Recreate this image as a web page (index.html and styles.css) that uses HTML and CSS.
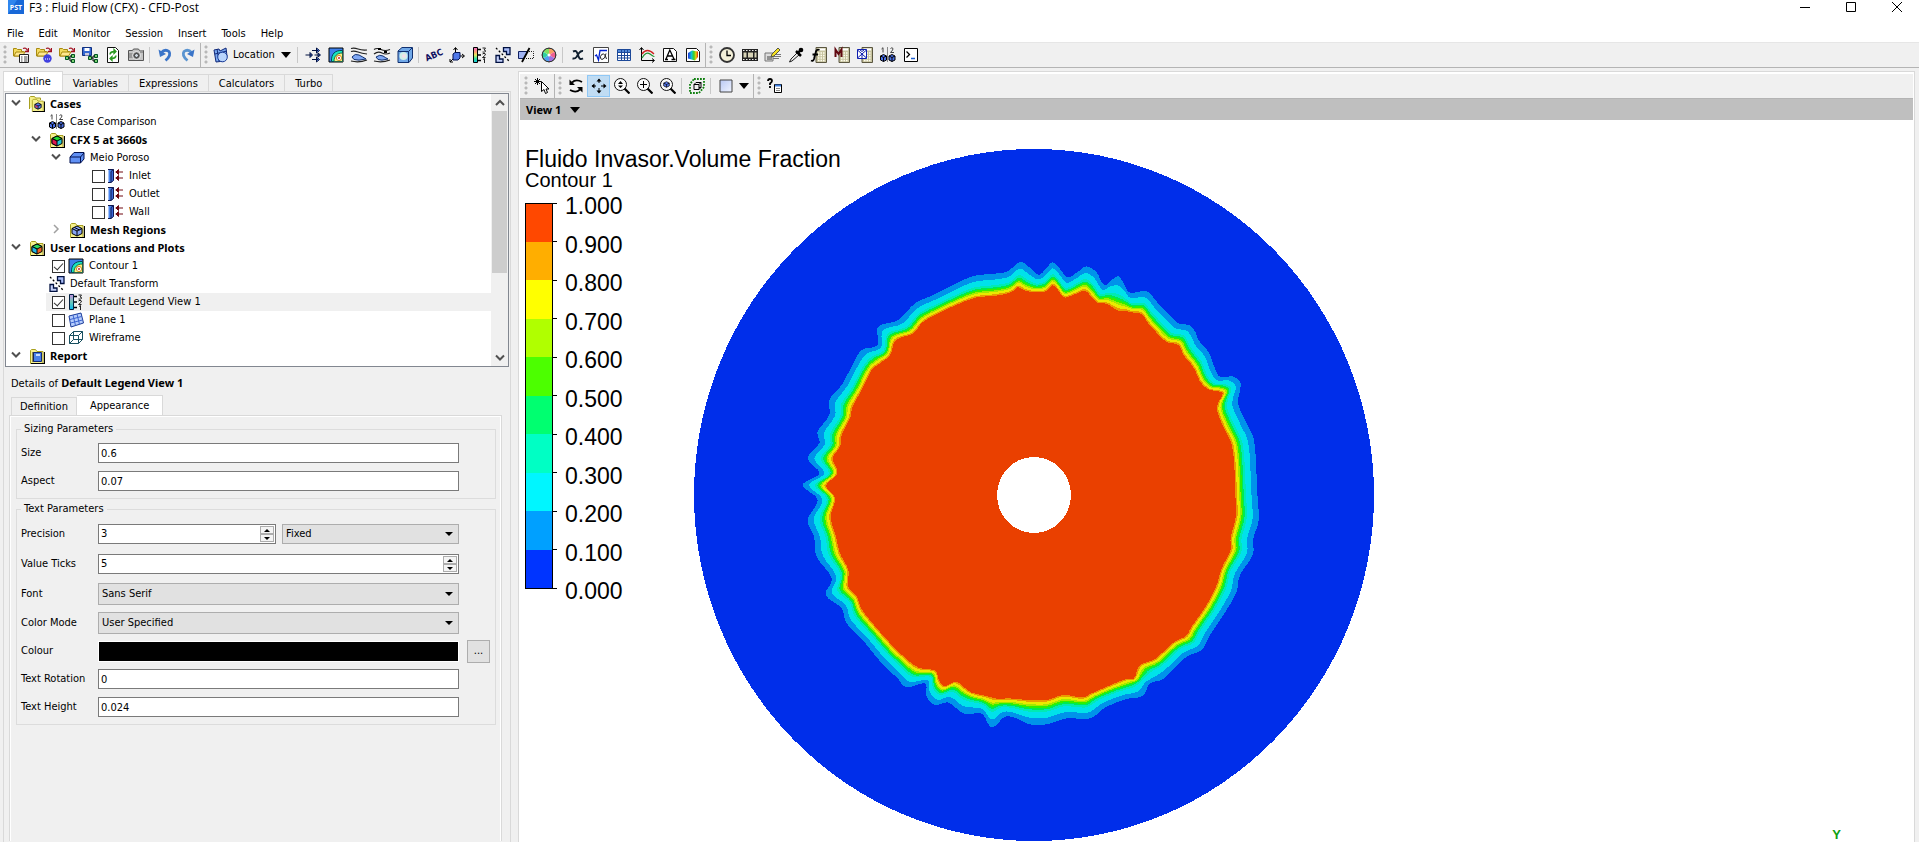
FILE: index.html
```html
<!DOCTYPE html>
<html lang="en">
<head>
<meta charset="UTF-8" />
<meta name="viewport" content="width=device-width, initial-scale=1" />
<title>F3 : Fluid Flow (CFX) - CFD-Post</title>
<link rel="stylesheet" href="styles.css">
</head>
<body>

<!-- shared icons -->
<svg class="defs" aria-hidden="true">
  <defs>
    <linearGradient id="gRain" x1="0" y1="0" x2="0" y2="1">
      <stop offset="0" stop-color="#f06ac8"/><stop offset=".3" stop-color="#ff9a70"/><stop offset=".5" stop-color="#e8f060"/><stop offset=".75" stop-color="#30e0a0"/><stop offset="1" stop-color="#10c8e8"/>
    </linearGradient>
    <linearGradient id="gCool" x1="0" y1="0" x2="0" y2="1">
      <stop offset="0" stop-color="#c890e0"/><stop offset=".5" stop-color="#70c8b8"/><stop offset="1" stop-color="#00b8f0"/>
    </linearGradient>
    <linearGradient id="gSq" x1="0" y1="0" x2="1" y2="1">
      <stop offset="0" stop-color="#b8c8f4"/><stop offset="1" stop-color="#f0f4ff"/>
    </linearGradient>
    <linearGradient id="gSpec" x1="0" y1="0" x2="1" y2="0">
      <stop offset="0" stop-color="#2030e0"/><stop offset=".35" stop-color="#10c0d0"/><stop offset=".6" stop-color="#40d020"/><stop offset=".8" stop-color="#f0d010"/><stop offset="1" stop-color="#e02010"/>
    </linearGradient>
  </defs>
  <symbol id="openfolder" viewBox="0 0 16 16">
    <path d="M.5 9V1.500h3l1 1h4v2h2L8 9z" fill="#f4dc60" stroke="#a88a10"/>
    <path d="M1 9l2-4h9L9.500 9z" fill="#ffe890" stroke="#a88a10"/>
    <path d="M10 1.500q3-1.500 4.500 2M15.500 1v3.500H12" fill="none" stroke="#a01020" stroke-width="1.300"/>
  </symbol>
  <symbol id="folder" viewBox="0 0 16 16">
    <path d="M1.500 15.500V2.500l1-1h4l1.500 2h6v12z" fill="#f6f08c" stroke="#a8a020"/>
    <path d="M2 15.500h13.500V4" fill="none" stroke="#000" stroke-width="1.200"/>
  </symbol>
  <symbol id="cube" viewBox="0 0 10 9">
    <path d="M5 .5l4 2v4l-4 2-4-2v-4z" fill="#5a7cf0" stroke="#000"/>
    <path d="M1 2.500l4 2 4-2M5 4.500v4" fill="none" stroke="#000"/>
  </symbol>
  <symbol id="compare" viewBox="0 0 16 16">
    <path d="M1.500 2L3 .7V5.500M10.500 1.500q1.500-1.500 2.500 0 .5 1-2.500 4H14" fill="none" stroke="#444"/>
    <path d="M7.500 0v15" stroke="#888"/>
    <path d="M3.500 7.500l3 1.500v4l-3 1.500-3-1.500V9zM12 7.500l3 1.500v4l-3 1.500L9 13V9z" fill="#4a70e8" stroke="#000"/>
    <path d="M.5 9l3 1.500 3-1.500M3.500 10.500v4M9 9l3 1.500L15 9M12 10.500v4" fill="none" stroke="#000"/>
  </symbol>
  <symbol id="boundary" viewBox="0 0 16 16">
    <path d="M.5 1.500h5v11l-3 2h-2z" fill="#4a86f0"/><path d="M5.500 1.500v11l-2.500 2v-11l2.500-2H0M0 14.500h3" fill="#3a68d8" stroke="#101850"/>
    <path d="M7.500 4H15M7.500 10H15M10.500 1.500v5L8 4zM10.500 7.500v5L8 10z" fill="#700810" stroke="#700810"/>
  </symbol>
  <symbol id="contour" viewBox="0 0 16 16">
    <path d="M1 1h14v14H1z" fill="#3d80ec" stroke="#000"/>
    <path d="M3.500 14.500C3 7 7 3 14.500 3.500v11z" fill="#18e8c0" stroke="#045"/>
    <path d="M6 14.500C6 9 9 6 14.500 6v8.500z" fill="#f8f080" stroke="#264"/>
    <circle cx="11" cy="11" r="2.600" fill="#fff" stroke="#d09020"/><circle cx="11" cy="11" r="1" fill="#d02030"/>
  </symbol>
  <symbol id="transform" viewBox="0 0 16 16">
    <path d="M8.500.500h6.500v7h-3.500V4.500h-3z" fill="#a8bcf8" stroke="#001040" stroke-width="1.300"/>
    <path d="M1 8.500h3.500v3.500h3.500v3.500H1z" fill="#c4d0fa" stroke="#001040" stroke-width="1.300"/>
    <path d="M1 1l14 14" stroke="#000" stroke-width="1.300" stroke-dasharray="2 2"/>
  </symbol>
  <symbol id="legend" viewBox="0 0 16 16">
    <path d="M10.500 1h3l-1.500 2q2 0 1.500 1.500-1 1-3 .5M10.500 7q1.500-1.500 3 0 0 1.500-3 3.500h3M11 12.500l1.500-1V16" fill="none" stroke="#222"/>
    <path d="M6 2.500h3M6 8h3M6 13.500h3" stroke="#000" stroke-width="1.500"/>
  </symbol>
  <symbol id="loupe" viewBox="0 0 16 16">
    <circle cx="6.500" cy="6.500" r="6" fill="#fafafa" stroke="#111"/><path d="M10.500 10.500l5 5" stroke="#000" stroke-width="2.200"/>
  </symbol>
  <symbol id="calc" viewBox="0 0 16 16">
    <path d="M5 .5h10.500v15H5z" fill="#c8c4a0" stroke="#5a5640"/><path d="M7 2.500h7" stroke="#fff" stroke-width="2"/>
    <path d="M7 6h7.500M7 8.500h7.500M7 11h7.500M7 13.500h7.500" stroke="#fffef0" stroke-width="1.500" stroke-dasharray="1.500 1"/>
  </symbol>
  <symbol id="down" viewBox="0 0 12 12"><path d="M2 3.500l4 4 4-4" fill="none" stroke="#505050" stroke-width="2"/></symbol>
</svg>

<header class="titlebar">
  <svg class="appicon" viewBox="0 0 16 14"><path d="M0 0h16v14H0z" fill="#2f86ee"/><path d="M0 14L9 0h7v14z" fill="#1868d8"/><text x="8" y="10" text-anchor="middle" class="applogo">PST</text></svg>
  <span class="title">F3 : Fluid Flow (CFX) - CFD-Post</span>
  <button class="winbtn" aria-label="Minimize"><svg viewBox="0 0 12 12"><path d="M1 6.500h10" stroke="#000"/></svg></button>
  <button class="winbtn" aria-label="Maximize"><svg viewBox="0 0 12 12"><path d="M1.500 1.500h9v9h-9z" fill="none" stroke="#000"/></svg></button>
  <button class="winbtn" aria-label="Close"><svg viewBox="0 0 12 12"><path d="M1 1l10 10M11 1L1 11" stroke="#000"/></svg></button>
</header>

<nav class="menubar">
  <button>File</button><button>Edit</button><button>Monitor</button><button>Session</button><button>Insert</button><button>Tools</button><button>Help</button>
</nav>

<div class="toolbar main-toolbar">
  <div class="group">
    <i class="handle"></i>
    <button class="tool" aria-label="Load results"><svg viewBox="0 0 16 16"><use href="#openfolder"/><path d="M6.500 7.500h9v8h-9z" fill="#fff" stroke="#222"/><path d="M8 10h1.500M11 10h3.500M8 12h1.500M11 12h3.500M8 14h1.500M11 14h3.500" stroke="#444"/></svg></button>
    <button class="tool" aria-label="Load state"><svg viewBox="0 0 16 16"><use href="#openfolder"/><circle cx="11.500" cy="11.500" r="4.200" fill="#4040e0"/><path d="M9 12h5" stroke="#fff" stroke-dasharray="1 1"/></svg></button>
    <button class="tool" aria-label="Load tree"><svg viewBox="0 0 16 16"><use href="#openfolder"/><path d="M6.500 9.500h3v3h-3zM12.500 7.500h3v3h-3zM12.500 12.500h3v3h-3z" fill="#7ad070" stroke="#052"/><path d="M9.500 11H11V9h1.500M11 11v3h1.500" fill="none" stroke="#000"/></svg></button>
    <button class="tool" aria-label="Save state"><svg viewBox="0 0 16 16"><path d="M.5.500h9v8h-9z" fill="#3468d0" stroke="#103080"/><path d="M2.500 1h5v3h-5z" fill="#fff"/><path d="M3 6h4v2.500H3z" fill="#ccd"/><path d="M6.500 9.500h3v3h-3zM12.500 7.500h3v3h-3zM12.500 12.500h3v3h-3z" fill="#7ad070" stroke="#052"/><path d="M9.500 11H11V9h1.500M11 11v3h1.500" fill="none" stroke="#000"/></svg></button>
    <button class="tool" aria-label="Refresh"><svg viewBox="0 0 16 16"><path d="M2.500.500h8l3 3v12h-11z" fill="#fff" stroke="#111"/><path d="M5 7.500q0-3 4-3M9 2.500v4l2-2zM11 8.500q0 3-4 3M7 9.500v4l-2-2z" fill="#2a9a20" stroke="#2a9a20" stroke-width="1.300"/></svg></button>
    <button class="tool" aria-label="Snapshot"><svg viewBox="0 0 16 16"><path d="M.5 3.500h4l1-1.500h5l1 1.500h4v10H.5z" fill="#c4c4c4" stroke="#555"/><path d="M1 6h4v5H1zM12 3h3v3h-3z" fill="#999"/><circle cx="8.500" cy="8.500" r="4" fill="#777" stroke="#f0f0f0"/><circle cx="8.500" cy="8.500" r="2" fill="#d0d8e0" stroke="#333"/></svg></button>
    <i class="sep"></i>
    <button class="tool" aria-label="Undo"><svg viewBox="0 0 16 16"><path d="M4 6q4-4.500 8-1.500 2.500 4-3.500 9" fill="none" stroke="#3a74c8" stroke-width="2.800"/><path d="M1.500 2.500L3 10l6-3z" fill="#3a74c8"/></svg></button>
    <button class="tool" aria-label="Redo"><svg viewBox="0 0 16 16"><path d="M12 6Q8 1.500 4 4.500q-2.500 4 3.500 9" fill="none" stroke="#5a94d0" stroke-width="2.800"/><path d="M14.500 2.500L13 10 7 7z" fill="#3a74c8"/></svg></button>
  </div>
  <div class="group">
    <i class="handle"></i>
    <button class="locbtn"><svg class="ico" viewBox="0 0 16 16"><path d="M1 3l5-1 1 2 6-3 1 8-3 5-8 1z" fill="#7aa8f0" stroke="#102878"/><path d="M2 7l12-3M4 2l2 12" stroke="#102878"/><circle cx="9.500" cy="10" r="4.800" fill="#b8d4fc" stroke="#1a3c98"/></svg>Location<svg class="arrow" viewBox="0 0 10 6"><path d="M0 0h10L5 6z"/></svg></button>
    <i class="sep"></i>
    <button class="tool" aria-label="Vector"><svg viewBox="0 0 16 16"><path d="M.5 8H7M5 5.500L7.500 8 5 10.500zM7 3.500h6M11.500 1L14.500 3.500l-3 2.500zM9.500 8H15M13 6l2.500 2L13 10zM7 12.500h6M11.500 10l3 2.500-3 2.500z" fill="#6088f0" stroke="#001040"/></svg></button>
    <button class="tool" aria-label="Contour"><svg viewBox="0 0 16 16"><use href="#contour"/></svg></button>
    <button class="tool" aria-label="Streamline"><svg viewBox="0 0 16 16"><path d="M0 1.500q3-1 7 .5t9 1M0 4.500q3-1 7 .5t9 2M0 14q8 2 16-1" fill="none" stroke="#222" stroke-width="1.200"/><path d="M1 10q3-4 7-2t7 4q-8 2-12 .5z" fill="#80a8f4" stroke="#103070"/></svg></button>
    <button class="tool" aria-label="Particle track"><svg viewBox="0 0 16 16"><path d="M0 2.500q3-2 7 0t9 0M0 7q4-3 8-1t8 0M0 14q8 2 16-1" fill="none" stroke="#222" stroke-width="1.200"/><path d="M2 10q4-3 7-1t5 3q-7 2-10 .5z" fill="#80a8f4" stroke="#103070"/><path d="M4 1h3v2H4zM10 4h3v2h-3z"/></svg></button>
    <button class="tool" aria-label="Volume rendering"><svg viewBox="0 0 16 16"><path d="M1 4l4-3.500h10.500V11L12 15.500H1z" fill="#70a8e8" stroke="#103070"/><path d="M1 4.500h10.500v11M11.500 4.500L15 1" fill="none" stroke="#103070"/><circle cx="6.500" cy="9" r="4" fill="#d0f0e8"/><circle cx="7" cy="9" r="2" fill="#f4e0e8"/></svg></button>
    <i class="sep"></i>
    <button class="tool" aria-label="Text"><svg viewBox="0 0 16 16"><text x="8" y="11" text-anchor="middle" class="abc" transform="rotate(-24 8 8)">ABC</text></svg></button>
    <button class="tool" aria-label="Coordinate frame"><svg viewBox="0 0 16 16"><path d="M6.500 9V1M4.500 3l2-2.500 2 2.500M9 9h6M13 7l2.500 2-2.500 2M5 11l-4 4M1 12v3h3" fill="none" stroke="#000"/><path d="M4 7l2-1.500h5V11L9 13H4z" fill="#5078e8" stroke="#001050"/></svg></button>
    <button class="tool" aria-label="Legend"><svg viewBox="0 0 16 16"><path d="M1.500.500h4v15h-4z" fill="url(#gRain)" stroke="#000"/><use href="#legend"/></svg></button>
    <button class="tool" aria-label="Instance transform"><svg viewBox="0 0 16 16"><use href="#transform"/></svg></button>
    <button class="tool" aria-label="Clip plane"><svg viewBox="0 0 16 16"><path d="M.5 4.500h9L6 11.500H.5z" fill="#a0b4f4" stroke="#102060"/><path d="M9 4.500h6.500v7H7" fill="none" stroke="#222" stroke-dasharray="1 1"/><path d="M11.500 1L4 15" stroke="#000" stroke-width="1.800"/></svg></button>
    <button class="tool" aria-label="Color map"><svg viewBox="0 0 16 16"><circle cx="8" cy="8" r="6.800" fill="#fff" stroke="#333"/><path d="M8 8V1.500a6.500 6.500 0 0 1 5.600 3.200z" fill="#f8a060"/><path d="M8 8l5.600-3.200a6.500 6.500 0 0 1 0 6.400z" fill="#f06090"/><path d="M8 8l5.600 3.200A6.500 6.500 0 0 1 8 14.500z" fill="#a070e0"/><path d="M8 8v6.500a6.500 6.500 0 0 1-5.600-3.200z" fill="#50a0f0"/><path d="M8 8l-5.600 3.200a6.500 6.500 0 0 1 0-6.400z" fill="#30d0a0"/><path d="M8 8L2.400 4.800A6.500 6.500 0 0 1 8 1.500z" fill="#80e060"/><circle cx="8" cy="8" r="1.500" fill="#fff"/><circle cx="8" cy="8" r="6.800" fill="none" stroke="#333"/></svg></button>
    <i class="sep"></i>
    <button class="tool" aria-label="Variables"><svg viewBox="0 0 16 16"><path d="M3 4.500q3-1.500 4 1l2 5q1 2.500 4 .8M13 4q-2-.5-4 2L6.500 10q-1.500 2-4 1.500" fill="none" stroke="#102030" stroke-width="2"/></svg></button>
    <button class="tool" aria-label="Expressions"><svg viewBox="0 0 16 16"><path d="M.5.500h15v15H.5z" fill="#fff" stroke="#444"/><path d="M2 9l1.500-1 2 5 1.500-9.500H14" fill="none" stroke="#0020d0" stroke-width="1.300"/><path d="M13 6.500q-1 6-4 6-2-.5-1.500-3 1-3 3-2.500t3 5" fill="none" stroke="#222"/></svg></button>
    <button class="tool" aria-label="Table"><svg viewBox="0 0 16 16"><path d="M1.500 2.500h13v11h-13z" fill="#fff" stroke="#1c4898"/><path d="M2 3h12v2H2z" fill="#5088d8"/><path d="M1.500 5.500h13M1.500 8.500h13M1.500 11h13M5.500 3v11M8.500 3v11M11.500 3v11" stroke="#1c4898"/></svg></button>
    <button class="tool" aria-label="Chart"><svg viewBox="0 0 16 16"><path d="M2.500 1v12.500H15M.5 3l2-2.500 2 2.500M13 11.500l2.500 2-2.500 2" fill="none" stroke="#000"/><path d="M3 7q5-7 12 0" fill="none" stroke="#d02020" stroke-width="1.300"/><path d="M3 11q4-7 8-4t4 2" fill="none" stroke="#209030" stroke-width="1.300"/></svg></button>
    <button class="tool" aria-label="Comment"><svg viewBox="0 0 16 16"><path d="M1.500 1.500h10l3 3v10h-13z" fill="#fff" stroke="#111"/><path d="M4 12l3.800-9L12 12M5.500 9h5M3 12.500h3M9.500 12.500h4" fill="none" stroke="#000" stroke-width="1.300"/></svg></button>
    <button class="tool" aria-label="Figure"><svg viewBox="0 0 16 16"><path d="M1.500 1.500h10l3 3v10h-13z" fill="#fff" stroke="#111"/><path d="M3 6l4-2.500 6 1V10l-3 3.500-7-2z" fill="url(#gSpec)"/></svg></button>
  </div>
  <div class="group last">
    <i class="handle"></i>
    <button class="tool" aria-label="Timestep selector"><svg viewBox="0 0 16 16"><circle cx="8" cy="8" r="7" fill="#f4f0d8" stroke="#333" stroke-width="1.800"/><path d="M8 3.500V8.500h4" fill="none" stroke="#000" stroke-width="1.300"/></svg></button>
    <button class="tool" aria-label="Animation"><svg viewBox="0 0 16 16"><path d="M0 2h16v12H0z" fill="#222"/><path d="M1 3.500h14M1 12.500h14" stroke="#eee" stroke-dasharray="1.500 1.500"/><path d="M1.500 5.500h3v5h-3zM6 5.500h5v5H6zM12.500 5.500h2v5h-2z" fill="#d8d4b8"/></svg></button>
    <button class="tool" aria-label="Quick editor"><svg viewBox="0 0 16 16"><path d="M0 6h8v8H0zM8 7.500h8M8 9.500h8M8 11.500h6" fill="#ddd" stroke="#777"/><path d="M2 10h5M2 12h5" stroke="#444"/><path d="M13 1l2 2-6 6-3 1 1-3z" fill="#f4e020" stroke="#554"/></svg></button>
    <button class="tool" aria-label="Probe"><svg viewBox="0 0 16 16"><path d="M9 6l2 2-7 6-2.500 1L3 12z" fill="#e8e8e8" stroke="#222"/><path d="M8 4l5 5M10 6l3.500-4" stroke="#000" stroke-width="2.500"/><circle cx="13" cy="3" r="2.300"/></svg></button>
    <button class="tool" aria-label="Function calculator"><svg viewBox="0 0 16 16"><use href="#calc"/><path d="M8.500 3q-3-1.500-4 3L3 12q-.7 2.500-3 1.500M1.500 7.500H7" fill="none" stroke="#000" stroke-width="1.800"/></svg></button>
    <button class="tool" aria-label="Macro calculator"><svg viewBox="0 0 16 16"><use href="#calc"/><path d="M1.500 10V2.500L4.500 7l3-4.500V10" fill="none" stroke="#600810" stroke-width="2"/></svg></button>
    <button class="tool" aria-label="Mesh calculator"><svg viewBox="0 0 16 16"><use href="#calc"/><path d="M.5 2.500h9v9h-9z" fill="#fff" stroke="#1020b0"/><path d="M.5 3l4.500 4 4.500-4M5 7v4.500M.5 11L5 7l4.500 4M3 3l2 1.500L7 3" fill="none" stroke="#1020b0"/></svg></button>
    <button class="tool" aria-label="Case comparison"><svg viewBox="0 0 16 16"><use href="#compare"/></svg></button>
    <button class="tool" aria-label="Command editor"><svg viewBox="0 0 16 16"><path d="M1.500 1.500h13v13h-13z" fill="#fff" stroke="#000"/><path d="M3.500 4.500L6.500 7.500l-3 3" fill="none" stroke="#000" stroke-width="1.300"/><path d="M8 11.500h4" stroke="#2060d0" stroke-width="1.500"/></svg></button>
  </div>
</div>

<main class="workspace">
  <aside class="side">
    <div class="tabs">
      <button class="tab active">Outline</button><button class="tab">Variables</button><button class="tab">Expressions</button><button class="tab">Calculators</button><button class="tab">Turbo</button>
    </div>
    <div class="sidepane">
      <div class="treebox">
        <ul class="tree">
          <li>
            <div class="row"><svg class="twisty" viewBox="0 0 12 12"><use href="#down"/></svg><span class="item bold"><svg class="ico" viewBox="0 0 16 16"><path d="M.5 13V1.500l1-1h4l1 1.500h5v2" fill="#f6f08c" stroke="#a8a020"/><use href="#folder" x="2" y="2" width="14" height="14"/><use href="#cube" x="5" y="6" width="8" height="8"/><path d="M6.500 9l2 1.200V12L6.500 11z" fill="#e03060"/></svg>Cases</span></div>
            <ul>
              <li><div class="row"><i class="twisty"></i><span class="item"><svg class="ico" viewBox="0 0 16 16"><use href="#compare"/></svg>Case Comparison</span></div></li>
              <li>
                <div class="row"><svg class="twisty" viewBox="0 0 12 12"><use href="#down"/></svg><span class="item bold"><svg class="ico" viewBox="0 0 16 16"><use href="#folder"/><path d="M8 4l5 2.500v5L8 14l-5-2.500v-5z" stroke="#000" fill="#20c8d8"/><path d="M8 4l5 2.500L8 9 3 6.500z" fill="#20d830" stroke="#000"/><path d="M3 6.500L8 9v5l-5-2.500z" fill="#e01850" stroke="#000"/></svg>CFX 5 at 3660s</span></div>
                <ul>
                  <li>
                    <div class="row"><svg class="twisty" viewBox="0 0 12 12"><use href="#down"/></svg><span class="item"><svg class="ico" viewBox="0 0 16 16"><path d="M1 7l4-4.500h10V9l-3.500 4H1z" fill="#6090f4" stroke="#001050"/><path d="M1 7h10.500v6M11.500 7L15 3" fill="none" stroke="#001050"/></svg>Meio Poroso</span></div>
                    <ul>
                      <li><div class="row"><i class="twisty"></i><label class="item"><input type="checkbox"><svg class="ico" viewBox="0 0 16 16"><use href="#boundary"/></svg>Inlet</label></div></li>
                      <li><div class="row"><i class="twisty"></i><label class="item"><input type="checkbox"><svg class="ico" viewBox="0 0 16 16"><use href="#boundary"/></svg>Outlet</label></div></li>
                      <li><div class="row"><i class="twisty"></i><label class="item"><input type="checkbox"><svg class="ico" viewBox="0 0 16 16"><use href="#boundary"/></svg>Wall</label></div></li>
                    </ul>
                  </li>
                  <li><div class="row"><svg class="twisty" viewBox="0 0 12 12"><path d="M4 2l4 4-4 4" fill="none" stroke="#a0a0a0" stroke-width="1.500"/></svg><span class="item bold"><svg class="ico" viewBox="0 0 16 16"><use href="#folder"/><path d="M8 4l5 2.500v5L8 14l-5-2.500v-5z" fill="#88a4f4" stroke="#000"/><path d="M3 6.500L8 9l5-2.500M8 9v5M5.500 5.500l5 2.500" fill="none" stroke="#000"/></svg>Mesh Regions</span></div></li>
                </ul>
              </li>
            </ul>
          </li>
          <li>
            <div class="row"><svg class="twisty" viewBox="0 0 12 12"><use href="#down"/></svg><span class="item bold"><svg class="ico" viewBox="0 0 16 16"><use href="#folder"/><path d="M8 4l5 2.500v5L8 14l-5-2.500v-5z" fill="#f06020" stroke="#000"/><path d="M8 4l5 2.500L8 9 3 6.500z" fill="#30d860" stroke="#000"/><path d="M3 6.500L8 9v5l-5-2.500z" fill="#20b8e8" stroke="#000"/></svg>User Locations and Plots</span></div>
            <ul>
              <li><div class="row"><i class="twisty"></i><label class="item"><input type="checkbox" checked><svg class="ico" viewBox="0 0 16 16"><use href="#contour"/></svg>Contour 1</label></div></li>
              <li><div class="row"><i class="twisty"></i><span class="item"><svg class="ico" viewBox="0 0 16 16"><use href="#transform"/></svg>Default Transform</span></div></li>
              <li><div class="row"><i class="twisty"></i><label class="item selected"><input type="checkbox" checked><svg class="ico" viewBox="0 0 16 16"><path d="M1.500.500h4v15h-4z" fill="url(#gCool)" stroke="#024"/><use href="#legend"/></svg>Default Legend View 1</label></div></li>
              <li><div class="row"><i class="twisty"></i><label class="item"><input type="checkbox"><svg class="ico" viewBox="0 0 16 16"><path d="M1 4l12-3 2.500 10L3 15z" fill="#b4ccfc" stroke="#1c3c98"/><path d="M2 7.500L13.500 4.500M2.500 11L14.500 8M5 3l2.500 10.500M9 2l2.500 10.500" stroke="#3c64d0"/></svg>Plane 1</label></div></li>
              <li><div class="row"><i class="twisty"></i><label class="item"><input type="checkbox"><svg class="ico" viewBox="0 0 16 16"><path d="M1.500 5.500h9v8h-9zM5.500 1.500h9v8h-9zM1.500 5.500l4-4M10.500 5.500l4-4M1.500 13.500l4-4M10.500 13.500l4-4" fill="none" stroke="#185060"/></svg>Wireframe</label></div></li>
            </ul>
          </li>
          <li><div class="row"><svg class="twisty" viewBox="0 0 12 12"><use href="#down"/></svg><span class="item bold"><svg class="ico" viewBox="0 0 16 16"><use href="#folder"/><path d="M4.500 4.500h8v9h-8z" fill="#4a80e8" stroke="#102878"/><path d="M3 5h2M3 7h2M3 9h2M3 11h2M3 13h2" stroke="#222"/><path d="M7 6h4v2H7z" fill="#c8dcff"/></svg>Report</span></div></li>
        </ul>
        <div class="scrollbar">
          <svg viewBox="0 0 12 12"><path d="M2 8l4-4 4 4" fill="none" stroke="#505050" stroke-width="2"/></svg>
          <div class="thumb"></div>
          <svg class="end" viewBox="0 0 12 12"><use href="#down"/></svg>
        </div>
      </div>

      <p class="details">Details of <b>Default Legend View 1</b></p>
      <div class="tabs subtabs">
        <button class="tab">Definition</button><button class="tab active">Appearance</button>
      </div>
      <form class="formpane">
        <fieldset>
          <legend>Sizing Parameters</legend>
          <div class="field"><label for="size">Size</label><input type="text" id="size" value="0.6"></div>
          <div class="field"><label for="aspect">Aspect</label><input type="text" id="aspect" value="0.07"></div>
        </fieldset>
        <fieldset>
          <legend>Text Parameters</legend>
          <div class="field tall"><label for="precision">Precision</label>
            <div class="pair">
              <span class="spin"><input type="text" id="precision" value="3"><span class="steps"><button type="button" aria-label="Up"><svg viewBox="0 0 6 3"><path d="M0 3h6L3 0z"/></svg></button><button type="button" aria-label="Down"><svg viewBox="0 0 6 3"><path d="M0 0h6L3 3z"/></svg></button></span></span>
              <select aria-label="Format"><option>Fixed</option></select>
            </div>
          </div>
          <div class="field tall"><label for="ticks">Value Ticks</label>
            <span class="spin"><input type="text" id="ticks" value="5"><span class="steps"><button type="button" aria-label="Up"><svg viewBox="0 0 6 3"><path d="M0 3h6L3 0z"/></svg></button><button type="button" aria-label="Down"><svg viewBox="0 0 6 3"><path d="M0 0h6L3 3z"/></svg></button></span></span>
          </div>
          <div class="field tall"><label for="font">Font</label><select id="font"><option>Sans Serif</option></select></div>
          <div class="field"><label for="mode">Color Mode</label><select id="mode"><option>User Specified</option></select></div>
          <div class="field"><label for="colour">Colour</label><button type="button" id="colour" class="swatch" aria-label="Colour"></button><button type="button" class="more">...</button></div>
          <div class="field"><label for="rotation">Text Rotation</label><input type="text" id="rotation" value="0"></div>
          <div class="field"><label for="height">Text Height</label><input type="text" id="height" value="0.024"></div>
        </fieldset>
      </form>
    </div>
  </aside>

  <section class="viewer">
    <div class="toolbar view-toolbar">
      <div class="group">
        <i class="handle"></i>
        <button class="tool" aria-label="Select"><svg viewBox="0 0 16 16"><path d="M3.500 0v7M0 3.500h7M1 1l5 5M6 1L1 6" stroke="#000"/><path d="M7.500 3.500v10l2.500-2 1.500 4 2-1-1.500-3.500H15z" fill="#fff" stroke="#000"/></svg></button>
      </div>
      <div class="group">
        <i class="handle"></i>
        <button class="tool" aria-label="Rotate"><svg viewBox="0 0 16 16"><path d="M4 4.500q4-4 10-.5M12 11.500q-4 4-10 .5" fill="none" stroke="#000" stroke-width="1.800"/><path d="M1.500 1.500v5.500H7zM14.500 14.500V9H9z"/></svg></button>
        <button class="tool pressed" aria-label="Pan"><svg viewBox="0 0 16 16"><path d="M8 1v5M8 10v5M1 8h5M10 8h5" stroke="#000" stroke-dasharray="4 1"/><path d="M5.500 3.500L8 .5l2.500 3zM5.500 12.500L8 15.500l2.500-3zM3.500 5.500L.5 8l3 2.500zM12.500 5.500l3 2.500-3 2.500z"/></svg></button>
        <button class="tool" aria-label="Zoom"><svg viewBox="0 0 16 16"><use href="#loupe"/><path d="M4 6L6.500 3 9 6zM4 7.500h5L6.500 10z"/></svg></button>
        <button class="tool" aria-label="Zoom box"><svg viewBox="0 0 16 16"><use href="#loupe"/><path d="M6.500 3v7M3 6.500h7" stroke="#000"/></svg></button>
        <button class="tool" aria-label="Fit view"><svg viewBox="0 0 16 16"><use href="#loupe"/><use href="#cube" x="3" y="3" width="7" height="7"/></svg></button>
        <i class="sep"></i>
        <button class="tool" aria-label="Highlighting"><svg viewBox="0 0 16 16"><path d="M5 1h10v8l-5 6H1V6z" fill="none" stroke="#108010" stroke-width="1.800" stroke-dasharray="1.800 1.200"/><path d="M5 6.500h5v5H5zM7 4.500h5v5h-2M5 6.500l2-2M10 6.500l2-2M10 11.500l2-2" fill="none" stroke="#000"/></svg></button>
        <i class="sep"></i>
        <button class="tool viewports" aria-label="Viewports"><svg viewBox="0 0 16 16"><path d="M2 2h12v12H2z" fill="url(#gSq)" stroke="#444"/></svg><svg class="arrow" viewBox="0 0 10 6"><path d="M0 0h10L5 6z"/></svg></button>
      </div>
      <div class="group last">
        <i class="handle"></i>
        <button class="tool" aria-label="Help"><svg viewBox="0 0 16 16"><path d="M1 3q0-2 2-2t2 2q0 1-2 2.500V7M3 8v2" fill="none" stroke="#000" stroke-width="1.800"/><path d="M7.500 6.500h7v8h-7z" fill="#fff" stroke="#000"/><path d="M8 7.500h6" stroke="#4080e0" stroke-width="2"/><path d="M9 10.500h4M9 12.500h4" stroke="#888"/></svg></button>
      </div>
    </div>
    <button class="viewbar">View 1<svg class="arrow" viewBox="0 0 10 6"><path d="M0 0h10L5 6z"/></svg></button>
    <div class="canvas">
      <svg class="disc" viewBox="-288 -273 2040 2076">
        <g id="bands" shape-rendering="crispEdges">
          <ellipse cx="732" cy="765" rx="1020" ry="1038" fill="#002eea"/>
        </g>
        <ellipse cx="732" cy="765" rx="111" ry="114" fill="#fff" shape-rendering="crispEdges"/>
      </svg>
      <div class="plotlegend">
        <div class="varname">Fluido Invasor.Volume Fraction</div>
        <div class="plotname">Contour 1</div>
        <div class="scale">
          <svg class="colorbar" viewBox="0 0 32 387" shape-rendering="crispEdges">
            <path d="M1 1h27v39H1z" fill="#ff4800"/><path d="M1 39h27v39H1z" fill="#ffae00"/><path d="M1 77h27v39H1z" fill="#ffff00"/><path d="M1 116h27v39H1z" fill="#b0ff00"/><path d="M1 154h27v39H1z" fill="#4cff00"/><path d="M1 193h27v39H1z" fill="#00ff70"/><path d="M1 231h27v39H1z" fill="#00ffc4"/><path d="M1 270h27v39H1z" fill="#00f6ff"/><path d="M1 308h27v39H1z" fill="#00a0ff"/><path d="M1 347h27v39H1z" fill="#0034ff"/>
            <path d="M32 .5H.5v385H32M27.500 0v386M28 38.500h4M28 77.500h4M28 115.500h4M28 154.500h4M28 192.500h4M28 231.500h4M28 269.500h4M28 308.500h4M28 346.500h4" fill="none" stroke="#000"/>
          </svg>
          <div class="values">
            <span>1.000</span><span>0.900</span><span>0.800</span><span>0.700</span><span>0.600</span><span>0.500</span><span>0.400</span><span>0.300</span><span>0.200</span><span>0.100</span><span>0.000</span>
          </div>
        </div>
      </div>
      <span class="axis">Y</span>
    </div>
  </section>
</main>

<script>
  // fluid front: [outer x, outer y, inner x, inner y], clockwise from the top
  const front = [
    [690,66,684,142],[718,82,705,152],[745,104,735,157],[765,90,765,155],[786,67,788,136],[806,82,803,148],
    [832,112,822,172],[860,98,850,165],[890,79,882,152],[920,98,900,165],[942,135,922,188],[965,120,950,192],
    [986,109,985,212],[1004,135,1010,214],[1020,158,1030,218],[1070,154,1055,222],[1100,185,1075,250],
    [1135,220,1100,278],[1165,250,1128,305],[1200,256,1165,315],[1218,280,1180,345],[1225,300,1195,362],
    [1255,335,1215,390],[1275,385,1230,425],[1290,410,1255,448],[1330,410,1285,454],[1352,430,1298,462],
    [1347,465,1284,490],[1345,495,1282,515],[1370,550,1302,565],[1392,600,1325,612],[1398,670,1333,680],
    [1402,760,1336,765],[1406,840,1338,825],[1390,895,1322,895],[1388,945,1322,930],[1350,1005,1295,985],
    [1338,1060,1280,1035],[1300,1125,1250,1095],[1260,1185,1205,1160],[1235,1230,1188,1188],[1190,1250,1150,1208],
    [1140,1298,1095,1257],[1115,1320,1050,1275],[1080,1330,1032,1315],[1058,1368,1005,1318],[1010,1377,960,1336],
    [950,1400,905,1360],[900,1435,876,1372],[830,1435,820,1365],[770,1453,770,1380],[720,1453,715,1380],
    [680,1435,655,1375],[645,1430,625,1377],[606,1463,605,1372],[580,1425,580,1366],[560,1420,545,1358],
    [520,1420,520,1340],[475,1388,497,1325],[435,1395,465,1338],[410,1370,447,1322],[405,1330,435,1292],
    [350,1342,385,1283],[320,1312,345,1253],[275,1270,310,1220],[225,1208,265,1170],[170,1150,218,1112],
    [155,1105,200,1070],[107,1065,175,1040],[125,1015,175,990],[80,950,150,940],[72,890,138,890],
    [53,840,122,830],[83,780,136,775],[38,735,108,737],[88,700,142,700],[53,655,128,655],[88,610,150,620],
    [83,575,155,585],[118,525,180,535],[118,480,188,500],[155,435,215,450],[190,370,245,390],[215,330,270,370],
    [262,315,300,345],[265,260,318,300],[325,240,370,280],[375,190,400,245],[430,165,455,215],[500,130,510,190],
    [550,108,560,172],[600,102,610,168],[650,95,660,158]
  ];
  const levels = [
    [0, "#0093ea"], [0.27, "#00e2ea"], [0.52, "#00eab4"], [0.62, "#00ea50"], [0.69, "#30f000"],
    [0.76, "#a2ea00"], [0.83, "#eaea00"], [0.93, "#ea9c00"], [1, "#ea4000"]
  ];
  const bands = document.getElementById("bands");

  // closed smooth curve through the points
  function curve(pts) {
    const n = pts.length;
    let d = "M" + pts[0].join(" ");
    for (let i = 0; i < n; i++) {
      const a = pts[(i + n - 1) % n], b = pts[i], c = pts[(i + 1) % n], e = pts[(i + 2) % n];
      d += "C" + [b[0] + (c[0] - a[0]) / 6, b[1] + (c[1] - a[1]) / 6,
                  c[0] - (e[0] - b[0]) / 6, c[1] - (e[1] - b[1]) / 6, c[0], c[1]].join(" ");
    }
    return d + "Z";
  }

  levels.forEach(([t, color]) => {
    const path = document.createElementNS("http://www.w3.org/2000/svg", "path");
    path.setAttribute("d", curve(front.map(p => [p[0] + (p[2] - p[0]) * t, p[1] + (p[3] - p[1]) * t])));
    path.setAttribute("fill", color);
    bands.appendChild(path);
  });
</script>

</body>
</html>
```

FILE: styles.css
```css
* { box-sizing: border-box; }

body {
  margin: 0;
  height: 100vh;
  overflow: hidden;
  display: flex;
  flex-direction: column;
  background: #fff;
  color: #000;
  font-family: "DejaVu Sans Condensed", "DejaVu Sans", Tahoma, sans-serif;
  font-size: 11px;
  line-height: 14px;
}

button, input, select {
  font: inherit;
  color: inherit;
  margin: 0;
  padding: 0;
  border: 0;
  background: none;
}

svg { display: block; flex: none; }
.defs { position: absolute; width: 0; height: 0; }
.ico { width: 16px; height: 16px; }
.arrow { width: 10px; height: 6px; }
ul { list-style: none; margin: 0; padding: 0; }

b, .bold, .viewbar {
  font-family: "Noto Sans", "Open Sans", sans-serif;
  font-weight: 700;
}

/* title and menu */
.titlebar {
  display: flex;
  align-items: flex-start;
  height: 24px;
  padding-left: 8px;
}
.appicon { width: 16px; height: 14px; }
.applogo { font: bold 7px "Open Sans", sans-serif; fill: #fff; }
.title {
  flex: 1;
  padding-left: 5px;
  font: 12px/16px "Open Sans", sans-serif;
}
.winbtn {
  width: 46px;
  height: 14px;
  padding-left: 2px;
  display: flex;
  align-items: center;
  justify-content: center;
}
.winbtn svg { width: 12px; height: 12px; }
.menubar { display: flex; gap: 1px; height: 18px; }
.menubar button { padding: 2px 7px 0; }

/* toolbars */
.toolbar { display: flex; background: #f0f0f0; }
.main-toolbar {
  height: 26px;
  border-top: 1px solid #e6e6e6;
  border-bottom: 1px solid #b4b4b4;
}
.group {
  display: flex;
  align-items: center;
  padding-right: 1px;
  border-right: 1px solid #b4b4b4;
}
.group.last { border-right: 0; }
.handle {
  width: 9px;
  height: 20px;
  background: radial-gradient(circle at 5px 2px, #b8b8b8 1px, transparent 2px) 0 0 / 9px 5px;
}
.tool {
  width: 23px;
  height: 22px;
  display: flex;
  align-items: center;
  justify-content: center;
}
.tool svg { width: 16px; height: 16px; overflow: visible; }
.tool.pressed { background: #c0dcf3; outline: 1px solid #90c8f6; outline-offset: -1px; }
.abc { font: bold 9px "DejaVu Sans Condensed", sans-serif; fill: #101060; }
.sep {
  width: 6px;
  height: 16px;
  background: linear-gradient(#c8c8c8, #c8c8c8) 2px 0 / 1px 100% no-repeat;
}
.locbtn {
  display: flex;
  align-items: center;
  width: 85px;
  height: 22px;
  padding-left: 3px;
  gap: 4px;
}
.locbtn .arrow { margin-left: 2px; }

/* side panel */
.workspace { flex: 1; min-height: 0; display: flex; background: #f0f0f0; }
.side {
  flex: 0 0 518px;
  padding: 3px 7px 0 3px;
  display: flex;
  flex-direction: column;
}
.tabs { display: flex; align-items: flex-end; height: 20px; }
.tab {
  height: 17px;
  padding: 1px 10px 0;
  border: 1px solid #d9d9d9;
  border-left: 0;
  border-bottom: 0;
}
.tab.active {
  height: 20px;
  padding: 0 11px;
  background: #fff;
  border-left: 1px solid #d9d9d9;
}
.sidepane {
  flex: 1;
  min-height: 0;
  border: 1px solid #d9d9d9;
  border-bottom: 0;
  padding: 1px;
  display: flex;
  flex-direction: column;
}
.treebox {
  display: flex;
  flex: none;
  height: 274px;
  border: 1px solid #828790;
  background: #fff;
  overflow: hidden;
}
.tree { flex: 1; padding-top: 1px; }
.tree ul { padding-left: 20px; }
.row { display: flex; height: 18px; align-items: center; }
.twisty { width: 20px; height: 12px; margin-bottom: 2px; flex: none; }
.item {
  flex: 1;
  display: flex;
  align-items: center;
  height: 18px;
  padding-left: 3px;
}
.item .ico { margin-right: 5px; }
.item.selected { background: #f0f0f0; }
.item input {
  appearance: none;
  width: 13px;
  height: 13px;
  margin: 0 3px;
  border: 1px solid #333;
  background: #fff;
  display: flex;
  justify-content: center;
}
.item input:checked::after {
  content: "";
  width: 4px;
  height: 8px;
  border: solid #333;
  border-width: 0 1px 1px 0;
  transform: rotate(42deg);
}
.scrollbar {
  width: 17px;
  display: flex;
  flex-direction: column;
  align-items: center;
  background: #f0f0f0;
}
.scrollbar svg { width: 12px; height: 12px; margin: 3px 0 2px; }
.scrollbar .end { margin: auto 0 2px; }
.thumb { width: 15px; height: 162px; background: #cdcdcd; }

.details { margin: 9px 6px 4px; }
.subtabs { margin-left: 6px; }
.subtabs .tab { border-left: 1px solid #d9d9d9; height: 18px; padding: 0 8px; }
.subtabs .tab.active { height: 20px; border-left: 0; padding: 0 13px; }
.formpane {
  flex: 1;
  margin: 0 7px 0 4px;
  padding: 6px 5px 0 6px;
  border: 1px solid #d9d9d9;
  border-bottom: 0;
  box-shadow: inset 1px 1px #fff, inset -1px 0 #fff;
}
fieldset {
  margin: 0 0 3px;
  padding: 3px 4px;
  border: 1px solid #dcdcdc;
  min-width: 0;
}
legend { padding: 0 3px; }
.field { display: flex; align-items: center; height: 28px; padding-right: 32px; }
.field.tall { height: 30px; }
.field label { flex: 0 0 77px; }
.field > input, .field > select, .spin, .pair { flex: 1; min-width: 0; }
.field > input, .spin {
  height: 20px;
  padding: 0 2px;
  background: #fff;
  border: 1px solid #7a7a7a;
}
select {
  appearance: none;
  height: 22px;
  padding: 0 3px;
  border: 1px solid #adadad;
  background: #e1e1e1 url("data:image/svg+xml,%3Csvg xmlns='http://www.w3.org/2000/svg' width='8' height='4'%3E%3Cpath d='M0 0h8L4 4z'/%3E%3C/svg%3E") no-repeat right 5px center;
}
.pair { display: flex; gap: 6px; }
.pair select { flex: 0 0 177px; height: 20px; }
.spin { display: flex; align-items: center; padding-right: 1px; }
.spin input { flex: 1; min-width: 0; }
.steps { display: flex; flex-direction: column; }
.steps button {
  width: 14px;
  height: 8px;
  border: 1px solid #adadad;
  background: #f4f4f4;
  display: flex;
  align-items: center;
  justify-content: center;
}
.steps svg { width: 6px; height: 3px; }
.swatch { flex: 1; height: 21px; background: #000; border: 1px solid #fff; }
.more {
  width: 23px;
  height: 23px;
  margin: 0 -31px 0 8px;
  background: #e1e1e1;
  border: 1px solid #adadad;
}

/* 3D viewer */
.viewer {
  flex: 1;
  min-width: 0;
  margin: 3px 4px 0 0;
  padding: 2px 1px 0;
  border: 1px solid #d9d9d9;
  border-bottom: 0;
  background: #fff;
  display: flex;
  flex-direction: column;
}
.view-toolbar { height: 25px; border-bottom: 1px solid #b4b4b4; padding-left: 1px; }
.viewports { width: 38px; gap: 5px; }
.viewports .arrow { width: 10px; height: 6px; }
.viewbar {
  display: flex;
  align-items: center;
  gap: 9px;
  height: 21px;
  padding-left: 6px;
  background: #bfbfbf;
}
.canvas {
  flex: 1;
  min-height: 0;
  position: relative;
  overflow: hidden;
  font-family: "Liberation Sans", Arial, sans-serif;
}
.disc {
  position: absolute;
  left: 174px;
  top: 29px;
  width: 680px;
  height: 692px;
}
.plotlegend { position: relative; padding: 26px 0 0 5px; }
.varname { font-size: 23px; line-height: 26px; }
.plotname { font-size: 20px; line-height: 16px; }
.scale { display: flex; gap: 8px; padding-top: 6px; }
.colorbar { width: 32px; height: 387px; margin-top: 9px; }
.values {
  display: flex;
  flex-direction: column;
  justify-content: space-between;
  height: 409px;
  font-size: 23px;
  line-height: 24px;
}
.axis {
  position: absolute;
  right: 72px;
  bottom: 0;
  font-size: 13px;
  font-weight: 700;
  line-height: 15px;
  color: #10a010;
}
```
